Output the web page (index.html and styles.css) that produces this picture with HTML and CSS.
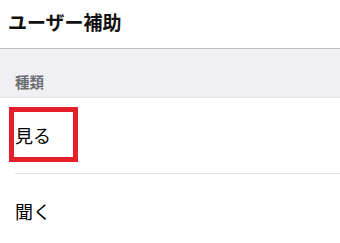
FILE: index.html
```html
<!DOCTYPE html>
<html lang="ja">
<head>
<meta charset="utf-8">
<link rel="stylesheet" href="styles.css">
</head>
<body>
<div class="screen">
  <header class="header"><h1 class="title">ユーザー補助</h1></header>
  <div class="section-head"><span class="section-label">種類</span></div>
  <ul class="list">
    <li class="row row-first"><span class="row-text">見る</span><span class="highlight"></span></li>
    <li class="row"><span class="row-text">聞く</span></li>
  </ul>
</div>
</body>
</html>
```
FILE: styles.css
```css
html, body {
  margin: 0;
  padding: 0;
  background: #ffffff;
}
.screen {
  width: 340px;
  height: 243px;
  overflow: hidden;
  font-family: "Noto Sans CJK JP", "Noto Sans", sans-serif;
  color: #000;
}
.header {
  height: 48px;
  border-bottom: 1px solid #bdbdbd;
  display: flex;
  align-items: center;
  padding-left: 8px;
  box-sizing: content-box;
}
.title {
  margin: 0;
  font-size: 19px;
  font-weight: 700;
  line-height: 24px;
  margin-top: -5px;
  color: #111;
}
.section-head {
  height: 48px;
  background: #efeff4;
  border-bottom: 1px solid #e2e2e6;
  display: flex;
  align-items: flex-end;
  padding-left: 15px;
  padding-bottom: 0;
}
.section-label {
  font-size: 14.5px;
  font-weight: 700;
  color: #6d6d72;
  line-height: 20px;
  margin-bottom: 5px;
}
.list {
  list-style: none;
  margin: 0;
  padding: 0 0 0 15px;
}
.row {
  position: relative;
  height: 75px;
  display: flex;
  align-items: center;
  font-size: 18px;
  line-height: 24px;
}
.row-first {
  border-bottom: 1px solid #e0e0e0;
}
.row-text {
  margin-top: -2px;
}
.highlight {
  position: absolute;
  left: -6px;
  top: 9px;
  width: 69px;
  height: 55px;
  box-sizing: border-box;
  border: 5px solid #e5202b;
}
```
